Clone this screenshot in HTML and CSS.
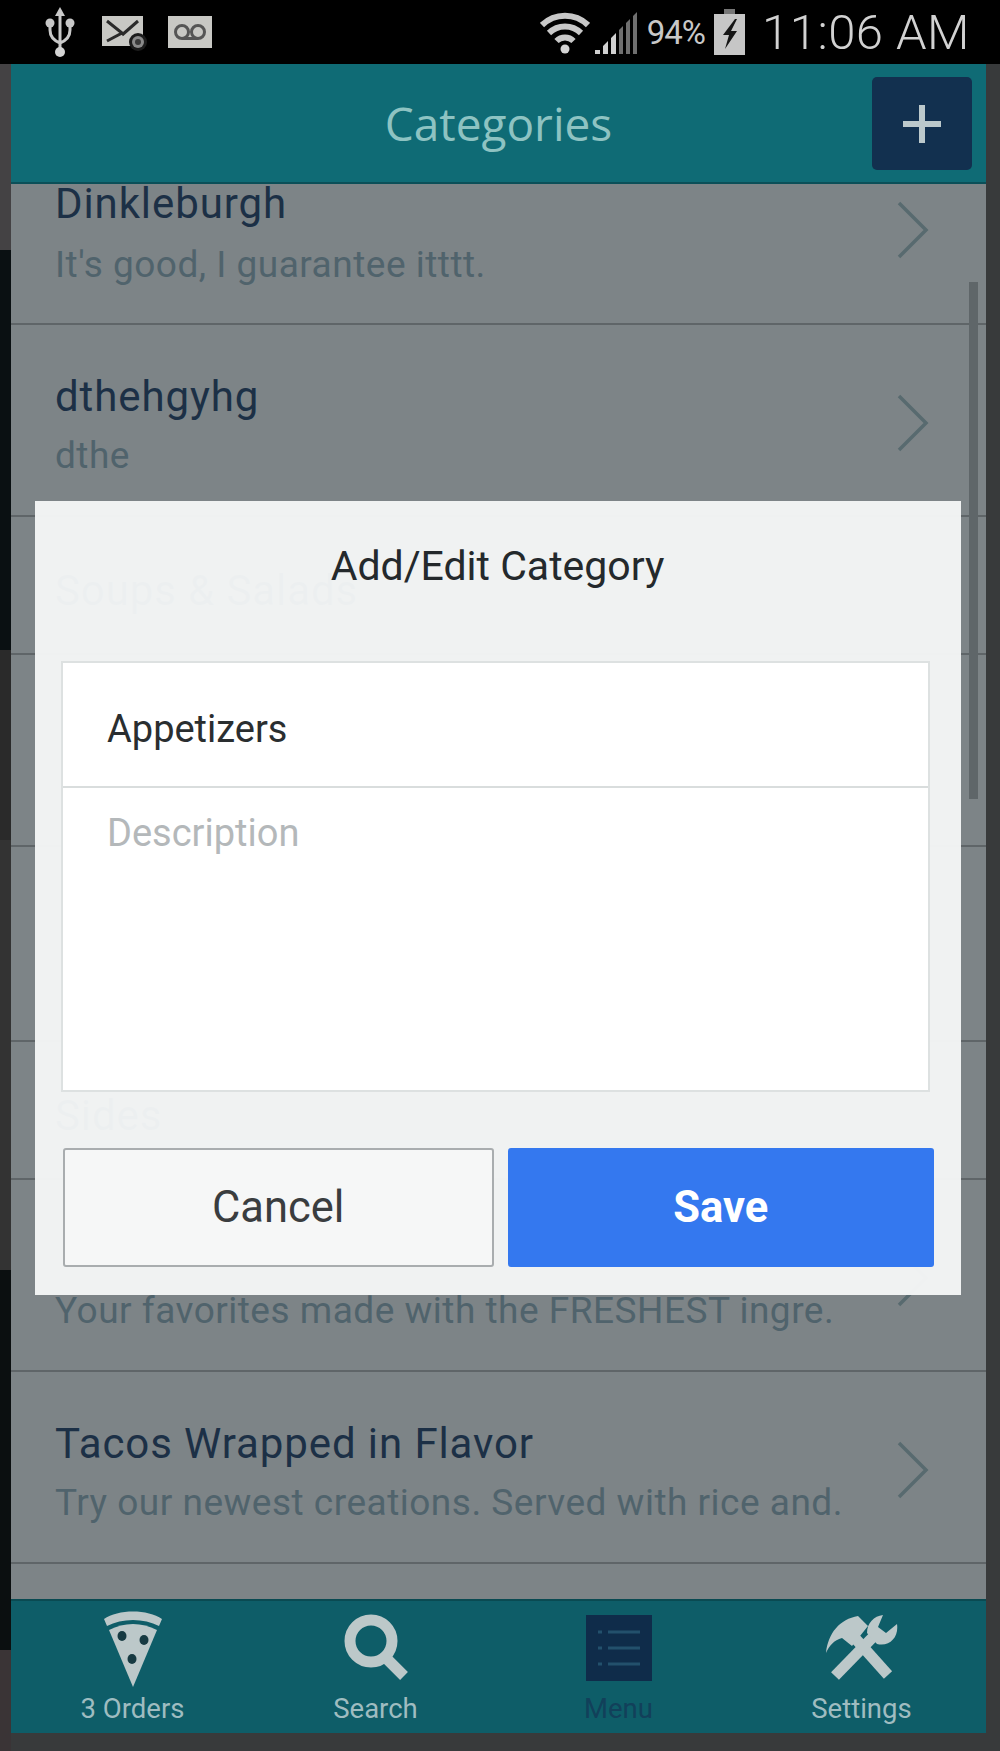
FILE: index.html
```html
<!DOCTYPE html>
<html lang="en">
<head>
  <meta charset="UTF-8" />
  <title>Categories</title>
  <link rel="stylesheet" href="styles.css">
</head>
<body>

  <div class="phone">

    <!-- Status bar -->
    <div class="status-bar">
      <div class="status-left">
        <svg class="ic-usb" viewBox="0 0 30 50">
          <path d="M15 0l-5 9h10z" fill="#c8c8c8"/>
          <path d="M15 6v38M5 18v5q0 9 10 13M25 18v5q0 9-10 13" fill="none" stroke="#c8c8c8" stroke-width="3"/>
          <circle cx="5" cy="16" r="4.5" fill="#c8c8c8"/>
          <circle cx="25" cy="16" r="4.5" fill="#c8c8c8"/>
          <circle cx="15" cy="45" r="5" fill="#d4d4d4"/>
        </svg>
        <svg class="ic-mail" viewBox="0 0 46 35">
          <rect width="41" height="30" fill="#c8c8c4"/>
          <path d="M5 5l15 12-15 8M36 5L20 19" fill="none" stroke="#2a2a2a" stroke-width="3"/>
          <circle cx="36" cy="26" r="9" fill="#1c1c1c"/>
          <circle cx="36" cy="26" r="6" fill="#8a8a8a"/>
          <circle cx="36" cy="26" r="3" fill="#3a3a3a"/>
        </svg>
        <svg class="ic-voicemail" viewBox="0 0 44 32">
          <rect width="44" height="32" fill="#c8c8c4"/>
          <circle cx="14" cy="16" r="6.5" fill="none" stroke="#555" stroke-width="3"/>
          <circle cx="30" cy="16" r="6.5" fill="none" stroke="#555" stroke-width="3"/>
          <path d="M14 22.5h16" stroke="#555" stroke-width="3"/>
        </svg>
      </div>
      <div class="status-right">
        <svg class="ic-wifi" viewBox="0 0 50 44">
          <path d="M2 15A33 33 0 0 1 48 15M9 23A23 23 0 0 1 41 23M16.5 31A12 12 0 0 1 33.5 31" fill="none" stroke="#c8c8c8" stroke-width="6"/>
          <circle cx="25" cy="39" r="4.5" fill="#d4d4d4"/>
        </svg>
        <svg class="ic-signal" viewBox="0 0 44 44">
          <path d="M0 44v-4h5v4zM8 44V36l5-5v13zM16 44V28l5-5v21z" fill="#d0d0d0"/>
          <path d="M24 44V20l4-4v28zM31 44V13l4-4v35zM38 44V6l4-4v42z" fill="#6f6f6f"/>
        </svg>
        <span class="battery-pct">94%</span>
        <svg class="ic-battery" viewBox="0 0 31 46">
          <rect x="10" width="11" height="6" fill="#777"/>
          <rect y="5" width="31" height="41" fill="#c6c6c6"/>
          <path d="M21 10L9 26h6l-4 14 12-18h-6l6-12z" fill="#151515"/>
        </svg>
        <span class="clock">11:06 AM</span>
      </div>
    </div>

    <!-- Header -->
    <div class="header">
      <h1>Categories</h1>
      <div class="add-btn">
        <svg viewBox="0 0 42 42"><path d="M21 2v38M2 21h38" stroke="#bcc9cc" stroke-width="6" fill="none"/></svg>
      </div>
    </div>

    <!-- List behind the dialog -->
    <div class="list">
      <div class="row row-cut">
        <div class="row-text">
          <div class="row-title">Dinkleburgh</div>
          <div class="row-sub">It's good, I guarantee itttt.</div>
        </div>
        <svg class="chevron" viewBox="0 0 32 58"><path d="M2 2l27 27L2 56"/></svg>
      </div>
      <div class="row row-tall">
        <div class="row-text">
          <div class="row-title">dthehgyhg</div>
          <div class="row-sub">dthe</div>
        </div>
        <svg class="chevron" viewBox="0 0 32 58"><path d="M2 2l27 27L2 56"/></svg>
      </div>
      <div class="row row-short">
        <div class="row-text"><div class="row-title">Soups &amp; Salads</div></div>
      </div>
      <div class="row row-tall"></div>
      <div class="row row-wide"></div>
      <div class="row row-short">
        <div class="row-text"><div class="row-title">Sides</div></div>
      </div>
      <div class="row row-tall">
        <div class="row-text">
          <div class="row-title row-title-hidden"></div>
          <div class="row-sub">Your favorites made with the FRESHEST ingre.</div>
        </div>
        <svg class="chevron" viewBox="0 0 32 58"><path d="M2 2l27 27L2 56"/></svg>
      </div>
      <div class="row row-tall">
        <div class="row-text">
          <div class="row-title">Tacos Wrapped in Flavor</div>
          <div class="row-sub">Try our newest creations. Served with rice and.</div>
        </div>
        <svg class="chevron" viewBox="0 0 32 58"><path d="M2 2l27 27L2 56"/></svg>
      </div>
      <div class="scrollbar"></div>
    </div>

    <!-- Tab bar -->
    <div class="tabbar">
      <div class="tab">
        <svg class="tab-icon icon-pizza" viewBox="0 0 62 78">
          <path d="M2 10C16 0 46 0 60 10l-3 7C42 9 20 9 5 17z" fill="#bcc8c9"/>
          <path d="M7 21C22 13 40 13 55 21L31 78z" fill="#bcc8c9"/>
          <ellipse cx="20" cy="27" rx="4.5" ry="5" fill="#173a42"/>
          <ellipse cx="42" cy="31" rx="4.5" ry="5" fill="#173a42"/>
          <ellipse cx="30" cy="50" rx="4.5" ry="5" fill="#173a42"/>
        </svg>
        <span>3 Orders</span>
      </div>
      <div class="tab">
        <svg class="tab-icon icon-search" viewBox="0 0 66 66">
          <circle cx="28" cy="27" r="21" fill="none" stroke="#bcc8c9" stroke-width="11"/>
          <path d="M43 44l18 18" stroke="#bcc8c9" stroke-width="11" fill="none"/>
        </svg>
        <span>Search</span>
      </div>
      <div class="tab tab-active">
        <svg class="tab-icon icon-menu" viewBox="0 0 66 66">
          <rect width="66" height="66" fill="#0f2c4a"/>
          <path d="M12 17h4M22 17h32M12 33h4M22 33h32M12 49h4M22 49h32" stroke="#23506c" stroke-width="3"/>
        </svg>
        <span>Menu</span>
      </div>
      <div class="tab">
        <svg class="tab-icon icon-tools" viewBox="0 0 72 68">
          <path d="M62 60L28 22" stroke="#bcc8c9" stroke-width="11" fill="none"/>
          <path d="M0 38C2 18 14 4 32 1l10 10-16 20-10-8C8 25 3 31 0 38z" fill="#bcc8c9"/>
          <path d="M9 61L47 22" stroke="#bcc8c9" stroke-width="11" fill="none"/>
          <path d="M41 18C41 8 48 1 57 0l-5 12 8 6 11-9c2 13-7 23-20 20z" fill="#bcc8c9"/>
        </svg>
        <span>Settings</span>
      </div>
    </div>

    <!-- Dialog -->
    <div class="dialog">
      <div class="dialog-title">Add/Edit Category</div>
      <div class="fields">
        <div class="field-name">Appetizers</div>
        <div class="field-desc">Description</div>
      </div>
      <div class="dialog-buttons">
        <div class="btn btn-cancel">Cancel</div>
        <div class="btn btn-save">Save</div>
      </div>
    </div>

  </div>

</body>
</html>
```

FILE: styles.css
```css
* {
  box-sizing: border-box;
}
html, body {
  margin: 0;
  height: 100%;
}
body {
  background-color: #383a3b;
  font-family: Roboto, "Liberation Sans", sans-serif;
  overflow: hidden;
}
.phone {
  position: relative;
  display: flex;
  flex-direction: column;
  height: 1751px;
  padding: 0 14px 18px 11px;
  /* the dark strip down the left side */
  background-image: linear-gradient(#444244 0, #444244 250px, #0a1012 250px, #0a1012 650px, #2a2a2a 650px, #2a2a2a 840px, #333 840px, #333 1270px, #0b0f10 1270px, #0b0f10 1650px, #3a3436 1650px);
  background-size: 11px 100%;
  background-repeat: no-repeat;
}

/* status bar */
.status-bar {
  display: flex;
  justify-content: space-between;
  align-items: center;
  height: 64px;
  flex-shrink: 0;
  margin: 0 -14px 0 -11px;
  padding: 0 30px 0 45px;
  background-color: #000;
  color: #c8c8c8;
}
.status-left, .status-right {
  display: flex;
  align-items: center;
}
.ic-usb { width: 30px; height: 50px; margin-right: 27px; }
.ic-mail { width: 46px; height: 35px; margin-right: 20px; margin-top: 2px; }
.ic-voicemail { width: 44px; height: 32px; }
.ic-wifi { width: 50px; height: 44px; margin-right: 5px; }
.ic-signal { width: 44px; height: 44px; margin-right: 8px; }
.battery-pct { font-size: 33px; letter-spacing: -1px; margin-right: 9px; }
.ic-battery { width: 31px; height: 46px; margin-right: 17px; }
.clock { font-size: 49px; font-weight: 300; letter-spacing: 0.5px; color: #d2d2d2; }

/* header */
.header {
  display: flex;
  align-items: center;
  justify-content: center;
  position: relative;
  height: 120px;
  flex-shrink: 0;
  background-color: #0f6b75;
  border-bottom: 2px solid #0b4f58;
}
.header h1 {
  margin: 0;
  font-size: 46px;
  font-weight: 400;
  font-family: "Open Sans", sans-serif;
  color: #8ec3c2;
}
.add-btn {
  position: absolute;
  right: 14px;
  top: 13px;
  display: flex;
  align-items: center;
  justify-content: center;
  width: 100px;
  height: 93px;
  background-color: #12304f;
  border-radius: 5px;
}
.add-btn svg {
  width: 42px;
  height: 42px;
}

/* list */
.list {
  position: relative;
  flex: 1;
  overflow: hidden;
  background-color: #7d8487;
}
.row {
  display: flex;
  align-items: center;
  justify-content: space-between;
  padding: 15px 57px 0 44px;
  border-bottom: 2px solid #5f6568;
}
.row-cut { height: 141px; padding-top: 0; padding-bottom: 37px; }
.row-cut .row-sub { margin-top: 20px; }
.row-tall { height: 192px; }
.row-wide { height: 195px; }
.row-short { height: 138px; padding-top: 11px; }
.row-title {
  font-size: 42px;
  line-height: 38px;
  letter-spacing: 0.9px;
  color: #1c3046;
}
.row-title-hidden {
  height: 38px;
}
.row-sub {
  margin-top: 18px;
  font-size: 37px;
  letter-spacing: 0.5px;
  color: #50636c;
}
.chevron {
  flex-shrink: 0;
  width: 32px;
  height: 58px;
  margin-top: -10px;
}
.chevron path {
  fill: none;
  stroke: #586a6f;
  stroke-width: 3.5;
}
.scrollbar {
  position: absolute;
  right: 8px;
  top: 98px;
  width: 9px;
  height: 517px;
  background-color: #5f6669;
}

/* tab bar */
.tabbar {
  display: flex;
  height: 134px;
  flex-shrink: 0;
  padding-right: 3px;
  background-color: #0e5d68;
  border-top: 2px solid #0a4a52;
}
.tab {
  flex: 1;
  display: flex;
  flex-direction: column;
  align-items: center;
  justify-content: flex-end;
  padding-bottom: 8px;
  font-size: 27.5px;
  color: #9fbcc0;
}
.icon-pizza { width: 62px; height: 78px; margin-bottom: 5px; }
.icon-search { width: 66px; height: 66px; margin-bottom: 12px; }
.icon-menu { width: 66px; height: 66px; margin-bottom: 11px; }
.icon-tools { width: 72px; height: 68px; margin-bottom: 9px; }
.tab-active {
  color: #12405a;
}

/* dialog */
.dialog {
  position: absolute;
  left: 35px;
  top: 501px;
  display: flex;
  flex-direction: column;
  width: 926px;
  height: 794px;
  padding: 0 27px 28px 26px;
  background-color: rgba(244, 246, 246, 0.97);
}
.dialog-title {
  height: 160px;
  padding-top: 41px;
  text-align: center;
  font-size: 41px;
  color: #24292c;
}
.fields {
  height: 431px;
  margin-right: 4px;
  background-color: #fff;
  border: 2px solid #dde1e1;
}
.field-name {
  height: 125px;
  padding: 44px 44px 0;
  font-size: 38px;
  color: #2a2e30;
  border-bottom: 2px solid #d9dddd;
}
.field-desc {
  padding: 23px 44px 0;
  font-size: 38px;
  color: #b4b8ba;
}
.dialog-buttons {
  display: flex;
  gap: 14px;
  margin-top: 56px;
  padding-left: 2px;
}
.btn {
  flex: 1;
  display: flex;
  align-items: center;
  justify-content: center;
  height: 119px;
  font-size: 43.5px;
  border-radius: 3px;
}
.btn-cancel {
  background-color: #f6f7f7;
  border: 2px solid #a9adaf;
  color: #3a3d3f;
}
.btn-save {
  background-color: #3478ef;
  color: #fff;
  font-weight: 700;
}
```
